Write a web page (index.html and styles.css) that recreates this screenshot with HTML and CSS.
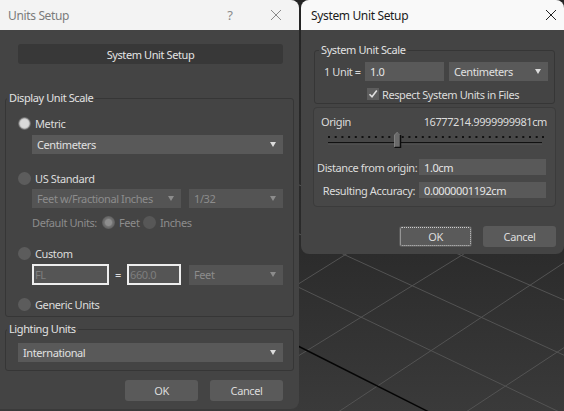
FILE: index.html
```html
<!DOCTYPE html>
<html>
<head>
<meta charset="utf-8">
<link rel="stylesheet" href="styles.css">
</head>
<body>
<div class="desktop">
  <svg class="viewport" width="564" height="411" viewBox="0 0 564 411">
    <g stroke="#535353" stroke-width="1" fill="none">
      <line x1="290" y1="229.8" x2="600" y2="371.7"/>
      <line x1="290" y1="283.2" x2="600" y2="431.4"/>
      <line x1="290" y1="181" x2="600" y2="315.6"/>
      <line x1="290" y1="289.2" x2="380" y2="233"/>
      <line x1="290" y1="361" x2="480" y2="244"/>
      <line x1="320" y1="424" x2="600" y2="239"/>
      <line x1="440" y1="429" x2="600" y2="324"/>
    </g>
    <line x1="290" y1="342" x2="450" y2="422.6" stroke="#050505" stroke-width="1.4"/>
  </svg>

  <section class="win win-units">
    <header class="titlebar inactive">
      <span class="title">Units Setup</span>
      <span class="help">?</span>
      <svg class="close" width="20" height="12" viewBox="0 0 20 12"><path d="M5 1 L15 11 M15 1 L5 11" stroke="#8a8a8a" stroke-width="1" fill="none"/></svg>
    </header>
    <div class="units-body">
      <button class="btn-dark">System Unit Setup</button>

      <fieldset class="group display">
        <legend>Display Unit Scale</legend>
        <div class="gbody">
          <div class="row"><span class="radio on"></span><span>Metric</span></div>
          <div class="dd indent r-cm"><span>Centimeters</span><i class="arrow"></i></div>

          <div class="row r-us"><span class="radio"></span><span>US Standard</span></div>
          <div class="pair indent r-feet">
            <div class="dd dis w-frac"><span>Feet w/Fractional Inches</span><i class="arrow"></i></div>
            <div class="dd dis w-32"><span>1/32</span><i class="arrow"></i></div>
          </div>
          <div class="row indent dis-text r-def">
            <span class="du-label">Default Units:</span>
            <span class="radio dison"></span><span class="feet-lbl">Feet</span>
            <span class="radio dis"></span><span>Inches</span>
          </div>

          <div class="row r-custom"><span class="radio"></span><span>Custom</span></div>
          <div class="pair indent r-cin">
            <div class="tf w-fl">FL</div>
            <span class="eq">=</span>
            <div class="tf w-660">660.0</div>
            <div class="dd dis w-32 tall"><span>Feet</span><i class="arrow"></i></div>
          </div>

          <div class="row r-gen"><span class="radio"></span><span>Generic Units</span></div>
        </div>
      </fieldset>

      <fieldset class="group lighting">
        <legend>Lighting Units</legend>
        <div class="gbody lbody">
          <div class="dd"><span>International</span><i class="arrow"></i></div>
        </div>
      </fieldset>

      <div class="actions">
        <button class="btn">OK</button>
        <button class="btn">Cancel</button>
      </div>
    </div>
  </section>

  <section class="win win-sus">
    <header class="titlebar active">
      <span class="title">System Unit Setup</span>
      <svg class="close" width="20" height="12" viewBox="0 0 20 12"><path d="M5 1 L15 11 M15 1 L5 11" stroke="#222" stroke-width="1" fill="none"/></svg>
    </header>
    <div class="sus-body">
      <fieldset class="group scale">
        <legend>System Unit Scale</legend>
        <div class="sbody">
          <div class="unit-row">
            <span class="unit-lbl">1 Unit =</span>
            <div class="field w-unit">1.0</div>
            <div class="dd w-cm2"><span>Centimeters</span><i class="arrow"></i></div>
          </div>
          <div class="check-row">
            <span class="check"><svg width="12" height="12" viewBox="0 0 12 12"><path d="M2.5 6.2 L5 8.7 L9.8 2.6" stroke="#e0e0e0" stroke-width="1.6" fill="none"/></svg></span>
            <span>Respect System Units in Files</span>
          </div>
        </div>
      </fieldset>

      <div class="origin">
        <div class="origin-row"><span>Origin</span><span>16777214.9999999981cm</span></div>
        <svg class="slider" width="216" height="17" viewBox="0 0 216 17">
          <g fill="#111">
            <rect x="0" y="5" width="2" height="2"/><rect x="6.7" y="5" width="2" height="2"/><rect x="13.4" y="5" width="2" height="2"/><rect x="20.1" y="5" width="2" height="2"/><rect x="26.8" y="5" width="2" height="2"/><rect x="33.5" y="5" width="2" height="2"/><rect x="40.2" y="5" width="2" height="2"/><rect x="46.9" y="5" width="2" height="2"/><rect x="53.6" y="5" width="2" height="2"/><rect x="60.3" y="5" width="2" height="2"/><rect x="67" y="5" width="2" height="2"/><rect x="73.7" y="5" width="2" height="2"/><rect x="80.4" y="5" width="2" height="2"/><rect x="87.1" y="5" width="2" height="2"/><rect x="93.8" y="5" width="2" height="2"/><rect x="100.5" y="5" width="2" height="2"/><rect x="107.2" y="5" width="2" height="2"/><rect x="113.9" y="5" width="2" height="2"/><rect x="120.6" y="5" width="2" height="2"/><rect x="127.3" y="5" width="2" height="2"/><rect x="134" y="5" width="2" height="2"/><rect x="140.7" y="5" width="2" height="2"/><rect x="147.4" y="5" width="2" height="2"/><rect x="154.1" y="5" width="2" height="2"/><rect x="160.8" y="5" width="2" height="2"/><rect x="167.5" y="5" width="2" height="2"/><rect x="174.2" y="5" width="2" height="2"/><rect x="180.9" y="5" width="2" height="2"/><rect x="187.6" y="5" width="2" height="2"/><rect x="194.3" y="5" width="2" height="2"/><rect x="201" y="5" width="2" height="2"/><rect x="207.7" y="5" width="2" height="2"/><rect x="214" y="5" width="2" height="2"/>
          </g>
          <rect x="0" y="11" width="214" height="1.4" fill="#111"/>
          <rect x="0" y="12.4" width="214" height="1" fill="#5a5a5a"/>
          <path d="M66.5 16.5 L66.5 4 L69.5 1 L72.5 4 L72.5 16.5 Z" fill="#6a6a6a"/>
          <path d="M72.5 4 L72.5 16.5 L66.5 16.5" stroke="#0c0c0c" stroke-width="1.5" fill="none"/>
          <path d="M66.5 16 L66.5 4 L69.5 1" stroke="#8a8a8a" stroke-width="0.8" fill="none"/>
        </svg>
        <div class="frow r-dist"><span class="flbl">Distance from origin:</span><div class="field w-val">1.0cm</div></div>
        <div class="frow r-acc"><span class="flbl">Resulting Accuracy:</span><div class="field w-val">0.0000001192cm</div></div>
      </div>

      <div class="actions sus-actions">
        <button class="btn focus">OK</button>
        <button class="btn">Cancel</button>
      </div>
    </div>
  </section>
</div>
</body>
</html>
```

FILE: styles.css
```css
* { box-sizing: border-box; }
html, body { margin: 0; padding: 0; }
body {
  width: 564px;
  height: 411px;
  overflow: hidden;
  font-family: "Noto Sans", "Open Sans", sans-serif;
  font-size: 11px;
  letter-spacing: -0.4px;
  color: #dcdcdc;
}
.desktop {
  position: relative;
  width: 564px;
  height: 411px;
  overflow: hidden;
  background: linear-gradient(180deg, #242424 0%, #2b2b2b 60%, #3a3a3a 100%);
}
.viewport { position: absolute; left: 0; top: 0; }

.win {
  position: absolute;
  top: 0;
  background: #444444;
  overflow: hidden;
  display: flex;
  flex-direction: column;
}
.win-units { left: 0; width: 299px; height: 409px; border-radius: 0 8px 8px 0; }
.win-sus { left: 301px; width: 263px; height: 254px; border-radius: 8px; }

.titlebar {
  flex: none;
  height: 30px;
  display: flex;
  align-items: center;
  font-size: 12px;
  letter-spacing: -0.35px;
}
.titlebar.inactive { background: #f3f3f3; color: #7b7b7b; padding-left: 8px; padding-right: 13px; }
.titlebar.active { background: #f9f9f9; color: #1b1b1b; padding-left: 10px; padding-right: 3px; }
.titlebar .title { flex: 1; }
.help { width: 20px; text-align: center; margin-right: 26px; font-size: 13px; color: #8a8a8a; }
.close { display: block; }

button { font-family: inherit; font-size: 11px; letter-spacing: -0.4px; color: #dcdcdc; border: none; padding: 0; }

.units-body { padding: 14px 5px 0 5px; display: flex; flex-direction: column; }
.btn-dark {
  margin: 0 11px 0 13px;
  height: 20px;
  background: #383838;
  border-radius: 3px;
  color: #e4e4e4;
}

fieldset.group {
  margin: 0;
  padding: 0;
  min-width: 0;
  border: 1px solid #363636;
  border-radius: 3px;
}
fieldset.group legend {
  line-height: 14px;
  padding: 0 2px;
  margin-left: 1px;
  color: #e2e2e2;
}
fieldset.display { margin-top: 27px; }
.gbody { padding: 10px 10px 3px 12px; display: flex; flex-direction: column; }
fieldset.lighting { margin-top: 5px; }
.lbody { padding: 7px 10px 8px 12px; }

.row { display: flex; align-items: center; height: 17px; flex: none; white-space: nowrap; }
.indent { margin-left: 14px; }
.radio {
  width: 13px; height: 13px; border-radius: 50%;
  background: #5c5c5c; margin-right: 4px; flex: none;
}
.radio.on { background: radial-gradient(circle, #dadada 0 3.8px, #c6c6c6 4.8px, #7c7c7c 5.6px, #606060 6.5px); }
.radio.dison { background: radial-gradient(circle, #8e8e8e 0 3px, #737373 4.2px, #6a6a6a 5.2px, #5e5e5e 6.5px); }
.radio.dis { background: #575757; }

.dd {
  height: 19px;
  background: #595959;
  display: flex;
  align-items: center;
  padding-left: 5px;
  flex: none;
  color: #e0e0e0;
  white-space: nowrap;
}
.dd .arrow {
  margin-left: auto;
  margin-right: 7px;
  width: 0; height: 0;
  border-left: 3.5px solid transparent;
  border-right: 3.5px solid transparent;
  border-top: 5px solid #dcdcdc;
}
.dd.dis { background: #545454; color: #8c8c8c; }
.dd.dis .arrow { border-top-color: #8c8c8c; }
.dd.tall { height: 20px; }

.r-cm { margin-top: 3px; }
.r-us { margin-top: 16px; }
.pair { display: flex; align-items: center; gap: 8px; }
.r-feet { margin-top: 2px; }
.w-frac { width: 149px; }
.w-32 { width: 94px; }
.r-def { margin-top: 6px; }
.dis-text { color: #8c8c8c; }
.du-label { width: 70px; }
.feet-lbl { width: 24px; }
.r-custom { margin-top: 14px; }
.r-cin { margin-top: 2px; gap: 0; }
.tf {
  height: 21px;
  border: 2px solid #eeeeee;
  background: #555555;
  color: #7e7e7e;
  padding-left: 1px;
  line-height: 17px;
}
.w-fl { width: 77px; }
.w-660 { width: 54px; margin-right: 8px; }
.eq { width: 18px; text-align: center; color: #dcdcdc; }
.r-gen { margin-top: 11px; }

.actions { display: flex; justify-content: flex-end; gap: 12px; margin-top: 9px; margin-right: 11px; }
.btn {
  width: 73px;
  height: 21px;
  background: #5a5a5a;
  border-radius: 3px;
}

.sus-body { padding: 0 8px 0 12px; display: flex; flex-direction: column; }
fieldset.scale { margin: 13px 1px 0 1px; }
fieldset.scale legend { margin-left: 4px; }
.sbody { padding: 5px 0 3px 9px; display: flex; flex-direction: column; }
.unit-row { display: flex; align-items: center; height: 19px; white-space: nowrap; }
.unit-lbl { width: 41px; }
.field {
  height: 19px;
  background: #595959;
  color: #e6e6e6;
  padding-left: 5px;
  display: flex;
  align-items: center;
  white-space: nowrap;
}
.w-unit { width: 79px; margin-right: 5px; }
.w-cm2 { width: 99px; }
.check-row { display: flex; align-items: center; height: 12px; margin-top: 7px; margin-left: 43px; white-space: nowrap; }
.check {
  width: 12px; height: 12px; background: #5d5d5d; margin-right: 3px; flex: none;
  display: flex;
}

.origin {
  margin-top: 3px;
  height: 100px;
  background: #474747;
  border: 1px solid #3b3b3b;
  border-radius: 4px;
  padding: 6px 8px 0 7px;
  display: flex;
  flex-direction: column;
}
.origin-row { display: flex; justify-content: space-between; height: 14px; align-items: center; }
.slider { display: block; margin: 3px 0 0 7px; }
.frow { display: flex; align-items: center; height: 16px; }
.r-dist { margin-top: 11px; }
.r-acc { margin-top: 7px; }
.flbl { width: 98px; text-align: right; margin-left: -4px; margin-right: 4px; white-space: nowrap; }
.w-val { width: 127px; height: 16px; }

.sus-actions { margin-top: 19px; gap: 11px; margin-right: 0; }
.btn.focus { outline: 1px dotted #cfcfcf; outline-offset: -2px; }
```
